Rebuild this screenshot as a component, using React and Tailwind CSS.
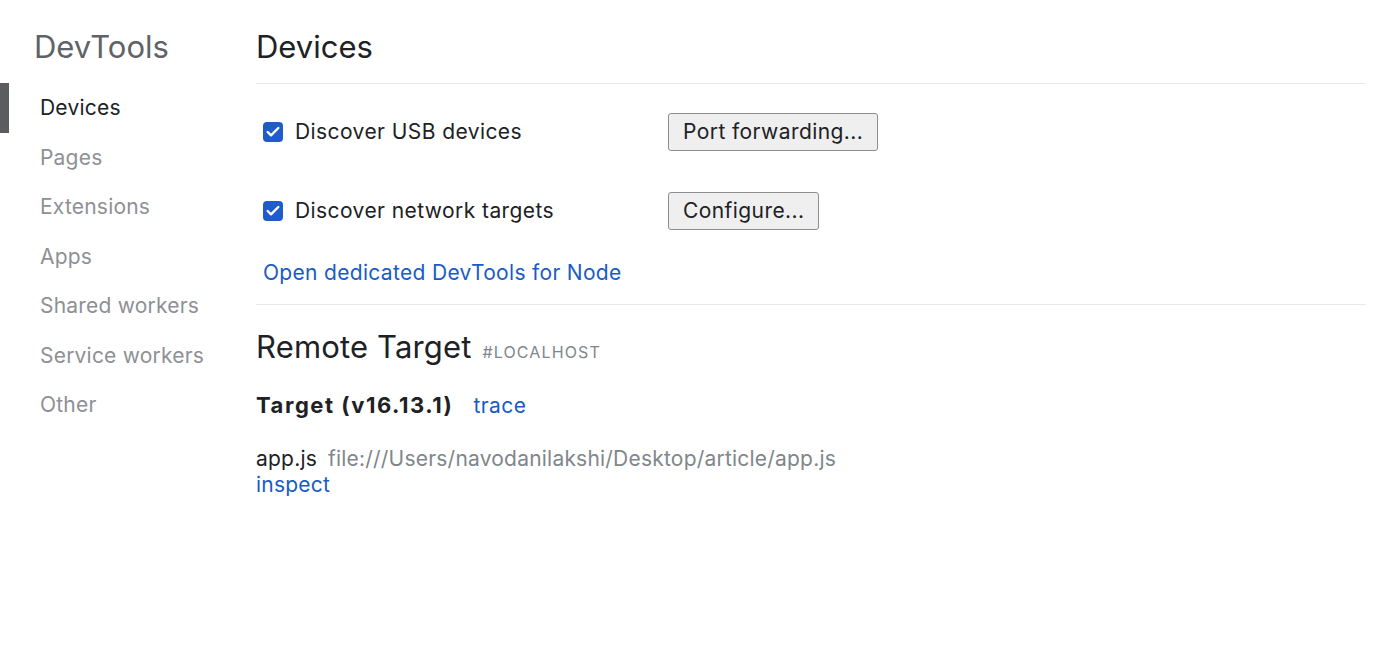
import { Check } from "lucide-react";

const navItems = [
  "Devices",
  "Pages",
  "Extensions",
  "Apps",
  "Shared workers",
  "Service workers",
  "Other",
];

function Checkbox() {
  return (
    <span className="flex h-5 w-5 items-center justify-center rounded-[4px] bg-[#1f5bc9]">
      <Check className="h-4 w-4 text-white" strokeWidth={3.5} />
    </span>
  );
}

function Button({ children }) {
  return (
    <button className="h-[38px] rounded-[3px] border border-[#8e8e8e] bg-[#efefef] px-[14px] text-[21px] tracking-[0.02em] text-[#202124]">
      {children}
    </button>
  );
}

export default function App() {
  return (
    <div
      className="flex min-h-[646px] w-[1400px] bg-white"
      style={{ fontFamily: "Inter, 'Noto Sans', sans-serif" }}
    >
      {/* sidebar */}
      <div className="w-[256px] shrink-0 pt-[27px]">
        <h1 className="pl-[34px] text-[31px] leading-[40px] text-[#5f6368]">DevTools</h1>
        <ul className="mt-[16px]">
          {navItems.map((item, i) => (
            <li
              key={item}
              className={
                i === 0
                  ? "flex h-[49.5px] items-center border-l-[9px] border-[#5b5c5f] pl-[31px] text-[21px] tracking-[0.01em] text-[#202124]"
                  : "flex h-[49.5px] items-center pl-[40px] text-[21px] tracking-[0.01em] text-[#8e9095]"
              }
            >
              {item}
            </li>
          ))}
        </ul>
      </div>

      {/* main */}
      <div className="w-[1110px] pt-[27px]">
        <h2 className="text-[31px] leading-[40px] text-[#202124]">Devices</h2>
        <div className="mt-[16px] border-t border-[#e8e8e8]" />

        <div className="pl-[7px] text-[21px] tracking-[0.02em]">
          <div className="mt-[29px] flex items-center">
            <label className="flex w-[405px] items-center gap-[12px] text-[#202124]">
              <Checkbox />
              Discover USB devices
            </label>
            <Button>Port forwarding...</Button>
          </div>
          <div className="mt-[41px] flex items-center">
            <label className="flex w-[405px] items-center gap-[12px] text-[#202124]">
              <Checkbox />
              Discover network targets
            </label>
            <Button>Configure...</Button>
          </div>
          <a className="mt-[28px] block leading-[30px] tracking-[0.015em] text-[#1a5bc4]">
            Open dedicated DevTools for Node
          </a>
        </div>

        <div className="mt-[16px] border-t border-[#e8e8e8]" />

        <div className="mt-[20px] flex items-baseline gap-[11px]">
          <h2 className="text-[31px] leading-[44px] tracking-[0.005em] text-[#202124]">Remote Target</h2>
          <span className="text-[16px] uppercase tracking-[0.07em] text-[#80868b]">#localhost</span>
        </div>

        <div className="mt-[20px] flex items-baseline gap-[20px]">
          <span className="text-[22px] font-bold tracking-[0.07em] text-[#202124]">Target (v16.13.1)</span>
          <a className="text-[21px] tracking-[0.02em] text-[#1a5bc4]">trace</a>
        </div>

        <div className="mt-[24px] flex items-baseline gap-[11px] text-[21px] leading-[26px] tracking-[0.01em]">
          <span className="text-[#202124]">app.js</span>
          <span className="text-[#80868b]">file:///Users/navodanilakshi/Desktop/article/app.js</span>
        </div>
        <a className="block text-[21px] leading-[26px] tracking-[0.01em] text-[#1a5bc4]">inspect</a>
      </div>
    </div>
  );
}
